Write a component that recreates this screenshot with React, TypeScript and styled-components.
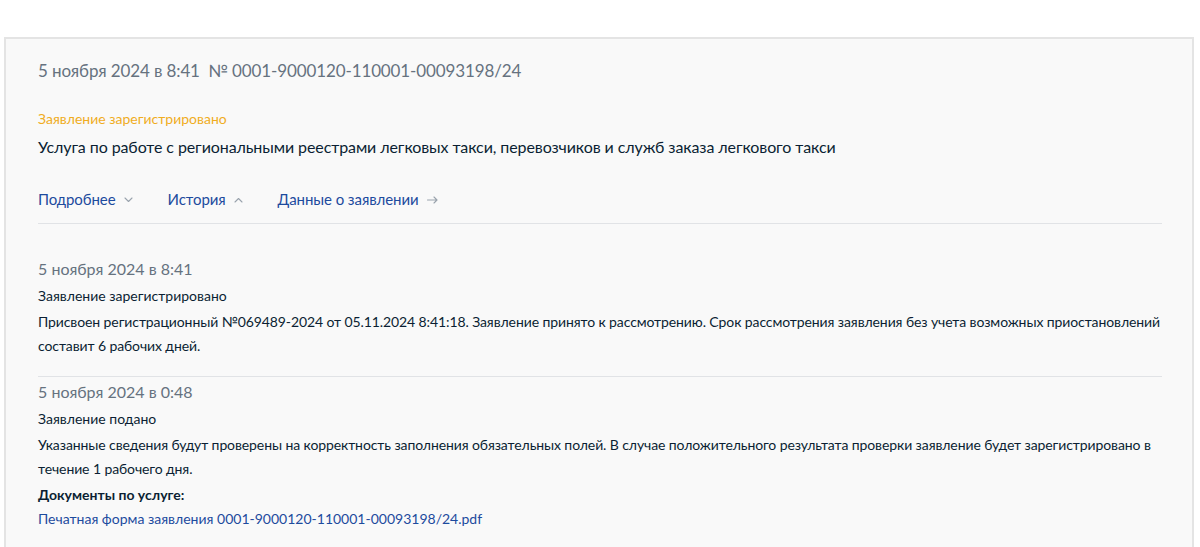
import styled, { createGlobalStyle } from "styled-components";

const GlobalStyle = createGlobalStyle`
    html, body {
        margin: 0;
        padding: 0;
        background: #ffffff;
        font-family: Lato, "Noto Sans", sans-serif;
        color: #0b1f33;
    }
`;

interface HistoryEntry {
    date: string;
    title: string;
    text: string;
    documents?: string[];
}

const history: HistoryEntry[] = [
    {
        date: "5 ноября 2024 в 8:41",
        title: "Заявление зарегистрировано",
        text: "Присвоен регистрационный №069489-2024 от 05.11.2024 8:41:18. Заявление принято к рассмотрению. Срок рассмотрения заявления без учета возможных приостановлений составит 6 рабочих дней.",
    },
    {
        date: "5 ноября 2024 в 0:48",
        title: "Заявление подано",
        text: "Указанные сведения будут проверены на корректность заполнения обязательных полей. В случае положительного результата проверки заявление будет зарегистрировано в течение 1 рабочего дня.",
        documents: ["Печатная форма заявления 0001-9000120-110001-00093198/24.pdf"],
    },
];

const Chevron = ({ up }: { up?: boolean }) => (
    <svg width="9" height="6" viewBox="0 0 9 6" fill="none">
        <path
            d={up ? "M1 5 L4.5 1.5 L8 5" : "M1 1 L4.5 4.5 L8 1"}
            stroke="#9aa3ad"
            strokeWidth="1.1"
            strokeLinecap="round"
            strokeLinejoin="round"
        />
    </svg>
);

const Arrow = () => (
    <svg width="11" height="8" viewBox="0 0 11 8" fill="none">
        <path
            d="M0.5 4 H10 M7 1 L10 4 L7 7"
            stroke="#9aa3ad"
            strokeWidth="1.1"
            strokeLinecap="round"
            strokeLinejoin="round"
        />
    </svg>
);

export default function App() {
    return (
        <>
            <GlobalStyle />
            <Page>
                <Card>
                    <Header>
                        5 ноября 2024 в 8:41&nbsp;&nbsp;№ 0001-9000120-110001-00093198/24
                    </Header>
                    <Status>Заявление зарегистрировано</Status>
                    <ServiceTitle>
                        Услуга по работе с региональными реестрами легковых такси,
                        перевозчиков и служб заказа легкового такси
                    </ServiceTitle>
                    <Tabs>
                        <TabLink>
                            Подробнее <Chevron />
                        </TabLink>
                        <TabLink>
                            История <Chevron up />
                        </TabLink>
                        <TabLink>
                            Данные о заявлении <Arrow />
                        </TabLink>
                    </Tabs>
                    <HistoryList>
                        {history.map((item, i) => (
                            <HistoryItem key={i} $first={i === 0} $last={i === history.length - 1}>
                                <ItemDate>{item.date}</ItemDate>
                                <ItemTitle>{item.title}</ItemTitle>
                                <ItemText>{item.text}</ItemText>
                                {item.documents && (
                                    <>
                                        <DocsLabel>Документы по услуге:</DocsLabel>
                                        {item.documents.map((doc) => (
                                            <DocLink key={doc}>{doc}</DocLink>
                                        ))}
                                    </>
                                )}
                            </HistoryItem>
                        ))}
                    </HistoryList>
                </Card>
            </Page>
        </>
    );
}

const Page = styled.div`
    padding: 37px 6px 0 4px;
    height: 547px;
    box-sizing: border-box;
    overflow: hidden;
`;

const Card = styled.div`
    background: #f9f9f9;
    border: 2px solid #e4e4e4;
    border-bottom: none;
    padding: 20px 30px 40px 32px;
    min-height: 560px;
    box-sizing: border-box;
`;

const Header = styled.div`
    font-size: 17px;
    line-height: 24px;
    letter-spacing: -0.12px;
    color: #66727f;
`;

const Status = styled.div`
    margin-top: 26px;
    font-size: 14px;
    line-height: 20px;
    color: #f0ad1e;
`;

const ServiceTitle = styled.div`
    margin-top: 6px;
    font-size: 16px;
    line-height: 24px;
    letter-spacing: -0.09px;
    color: #0b1f33;
`;

const Tabs = styled.div`
    display: flex;
    gap: 35px;
    margin-top: 28px;
    padding-bottom: 12px;
    border-bottom: 1px solid #e1e3e6;
`;

const TabLink = styled.a`
    display: inline-flex;
    align-items: center;
    gap: 8px;
    font-size: 15px;
    line-height: 24px;
    letter-spacing: -0.08px;
    color: #1d4b9e;
    cursor: pointer;

    svg {
        margin-top: 1px;
    }
`;

const HistoryList = styled.div`
    display: flex;
    flex-direction: column;
`;

const HistoryItem = styled.div<{ $first?: boolean; $last?: boolean }>`
    padding-top: ${(p) => (p.$first ? "33px" : "3px")};
    padding-bottom: ${(p) => (p.$last ? "0" : "18px")};
    border-bottom: ${(p) => (p.$last ? "none" : "1px solid #e1e3e6")};
`;

const ItemDate = styled.div`
    font-size: 16px;
    line-height: 24px;
    color: #66727f;
    margin-bottom: 3px;
`;

const ItemTitle = styled.div`
    font-size: 14px;
    line-height: 24px;
    color: #0b1f33;
    margin-bottom: 2px;
`;

const ItemText = styled.div`
    font-size: 14px;
    line-height: 24px;
    letter-spacing: -0.1px;
    color: #0b1f33;
`;

const DocsLabel = styled.div`
    margin-top: 2px;
    font-size: 14px;
    line-height: 24px;
    font-weight: 700;
    color: #0b1f33;
`;

const DocLink = styled.a`
    display: block;
    font-size: 14px;
    line-height: 24px;
    color: #1d4b9e;
    cursor: pointer;
`;
